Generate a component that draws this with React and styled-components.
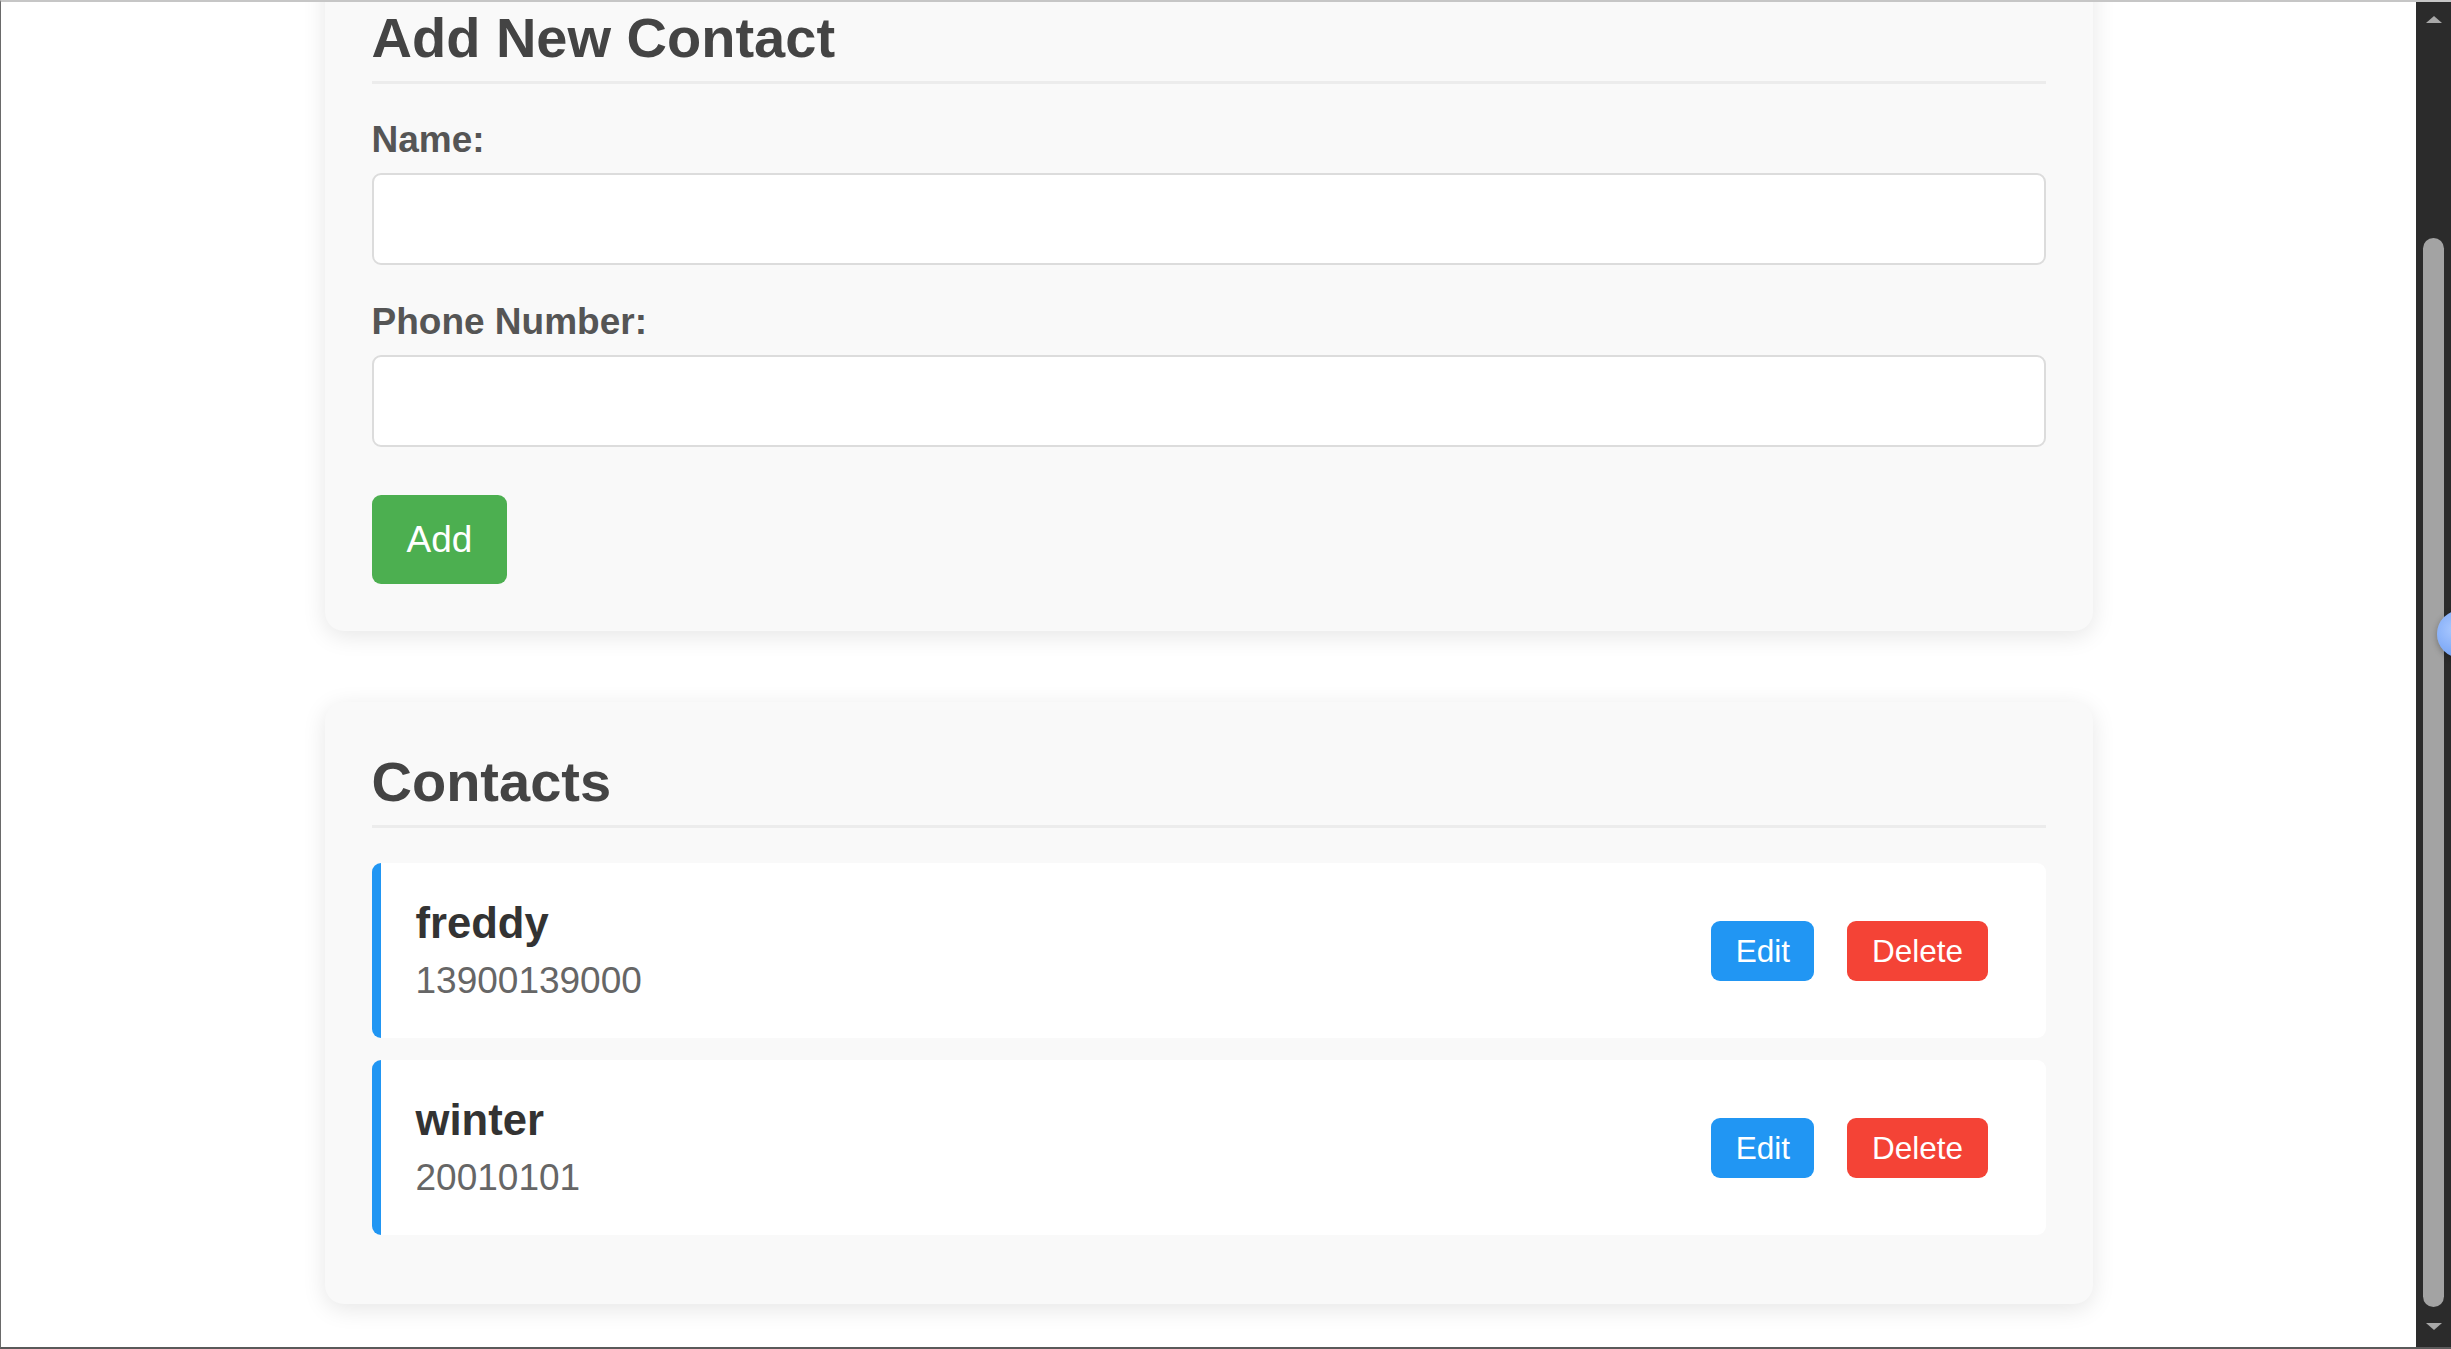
import React, { useState } from "react";
import styled, { createGlobalStyle } from "styled-components";

const GlobalStyle = createGlobalStyle`
  html, body {
    margin: 0;
    padding: 0;
    background: #ffffff;
    overflow: hidden;
  }
  * {
    box-sizing: border-box;
  }
  body {
    font-family: "Liberation Sans", Arial, sans-serif;
  }
`;

const Frame = styled.div`
  position: relative;
  display: flex;
  height: 100vh;
  border-top: 2px solid #c6c6c6;
  border-left: 1px solid #6a6a6a;
  border-bottom: 2px solid #5a5a5a;
  overflow: hidden;
`;

const Viewport = styled.main`
  flex: 1;
  overflow: hidden;
`;

const Container = styled.div`
  width: 1768px;
  margin: -44px auto 0;
`;

const Card = styled.section`
  background: #f9f9f9;
  border-radius: 19px;
  padding: 47px;
  margin-bottom: 71px;
  box-shadow: 0 5px 23px rgba(0, 0, 0, 0.1);
`;

const Heading = styled.h2`
  margin: 0 0 35px;
  padding-bottom: 11px;
  border-bottom: 3px solid #ececec;
  font-size: 56px;
  font-weight: bold;
  color: #444;
`;

const FormGroup = styled.div`
  margin-bottom: 36px;
`;

const Label = styled.label`
  display: block;
  margin-bottom: 12px;
  font-size: 37px;
  font-weight: bold;
  color: #555;
`;

const Input = styled.input`
  display: block;
  width: 100%;
  padding: 23px;
  font-family: "Liberation Sans", Arial, sans-serif;
  font-size: 37px;
  border: 2px solid #dcdcdc;
  border-radius: 9px;
  background: #fff;
  outline: none;
`;

const AddButton = styled.button`
  margin-top: 12px;
  padding: 23px 35px;
  font-family: "Liberation Sans", Arial, sans-serif;
  font-size: 37px;
  line-height: 43px;
  color: #fff;
  background: #4caf50;
  border: none;
  border-radius: 9px;
  cursor: pointer;
`;

const ContactList = styled.ul`
  list-style: none;
  margin: 0;
  padding: 0;
`;

const ContactItem = styled.li`
  display: flex;
  align-items: center;
  justify-content: space-between;
  margin-bottom: 22px;
  padding: 36px 58px 36px 35px;
  background: #fff;
  border-left: 9px solid #2196f3;
  border-radius: 9px;
`;

const ContactName = styled.h3`
  margin: 0 0 12px;
  font-size: 43.6px;
  font-weight: bold;
  color: #333;
`;

const ContactPhone = styled.p`
  margin: 0;
  font-size: 37px;
  color: #666;
`;

const Actions = styled.div`
  display: flex;
  gap: 33px;
`;

const ActionButton = styled.button`
  padding: 12px 24.5px;
  font-family: "Liberation Sans", Arial, sans-serif;
  font-size: 31.5px;
  line-height: 36px;
  color: #fff;
  background: ${(p) => (p.$danger ? "#f44336" : "#2196f3")};
  border: none;
  border-radius: 9px;
  cursor: pointer;
`;

const Scrollbar = styled.div`
  width: 35px;
  flex-shrink: 0;
  display: flex;
  flex-direction: column;
  align-items: center;
  padding: 14px 0 17px;
  background: #2b2b2b;
`;

const Arrow = styled.div`
  width: 0;
  height: 0;
  border-left: 8px solid transparent;
  border-right: 8px solid transparent;
  ${(p) =>
    p.$down
      ? "border-top: 7px solid #a8a8a8; margin-top: 16px;"
      : "border-bottom: 7px solid #a8a8a8;"}
`;

const Thumb = styled.div`
  flex: 1;
  width: 21px;
  margin-top: 215px;
  border-radius: 11px;
  background: #a3a3a3;
`;

const FloatingBubble = styled.div`
  position: absolute;
  top: 608px;
  right: -34px;
  width: 48px;
  height: 48px;
  border-radius: 50%;
  background: radial-gradient(circle at 35% 40%, #a9c8ff, #5f93f0);
  box-shadow: 0 2px 6px rgba(0, 0, 0, 0.3);
`;

export default function App() {
  const [contacts] = useState([
    { id: 1, name: "freddy", phone: "13900139000" },
    { id: 2, name: "winter", phone: "20010101" },
  ]);

  return (
    <>
      <GlobalStyle />
      <Frame>
        <Viewport>
          <Container>
            <Card>
              <Heading>Add New Contact</Heading>
              <FormGroup>
                <Label htmlFor="name">Name:</Label>
                <Input id="name" type="text" />
              </FormGroup>
              <FormGroup>
                <Label htmlFor="phone">Phone Number:</Label>
                <Input id="phone" type="text" />
              </FormGroup>
              <AddButton>Add</AddButton>
            </Card>

            <Card>
              <Heading>Contacts</Heading>
              <ContactList>
                {contacts.map((c) => (
                  <ContactItem key={c.id}>
                    <div>
                      <ContactName>{c.name}</ContactName>
                      <ContactPhone>{c.phone}</ContactPhone>
                    </div>
                    <Actions>
                      <ActionButton>Edit</ActionButton>
                      <ActionButton $danger>Delete</ActionButton>
                    </Actions>
                  </ContactItem>
                ))}
              </ContactList>
            </Card>
          </Container>
        </Viewport>
        <Scrollbar>
          <Arrow />
          <Thumb />
          <Arrow $down />
        </Scrollbar>
        <FloatingBubble />
      </Frame>
    </>
  );
}
